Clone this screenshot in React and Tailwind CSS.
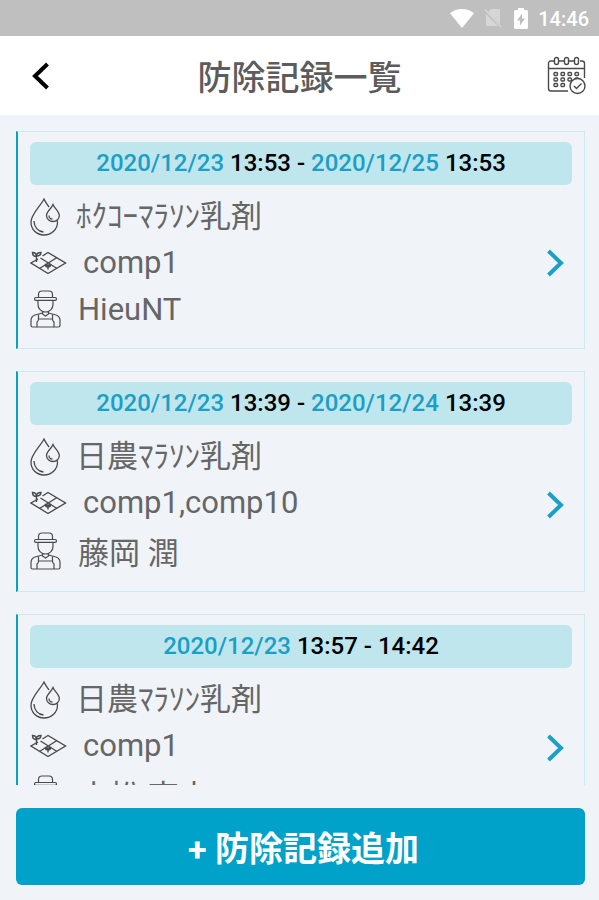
const records = [
  {
    id: 1,
    period: [
      { date: "2020/12/23", time: "13:53" },
      { date: "2020/12/25", time: "13:53" },
    ],
    pesticide: "ﾎｸｺｰﾏﾗｿﾝ乳剤",
    fields: "comp1",
    worker: "HieuNT",
  },
  {
    id: 2,
    period: [
      { date: "2020/12/23", time: "13:39" },
      { date: "2020/12/24", time: "13:39" },
    ],
    pesticide: "日農ﾏﾗｿﾝ乳剤",
    fields: "comp1,comp10",
    worker: "藤岡 潤",
  },
  {
    id: 3,
    period: [{ date: "2020/12/23", time: "13:57" }, { time: "14:42" }],
    pesticide: "日農ﾏﾗｿﾝ乳剤",
    fields: "comp1",
    worker: "小松 亮太",
  },
]

function WifiIcon() {
  return (
    <svg viewBox="0 0 24 19" className="h-[19px] w-6" fill="#fff" aria-hidden="true">
      <path d="M12 19 0 4.2C3.3 1.5 7.400 0 12 0s8.700 1.500 12 4.200z" />
    </svg>
  )
}

function NoSimIcon() {
  return (
    <svg viewBox="0 0 18 20" className="h-5 w-[18px]" fill="none" aria-hidden="true">
      <path d="M4 4 7 1h9v15zM2 6v12h12z" fill="#d6d6d6" />
      <path d="M1 1.500 17 19" stroke="#d6d6d6" strokeWidth="1.500" />
    </svg>
  )
}

function BatteryIcon() {
  return (
    <svg viewBox="0 0 14 21" className="h-[21px] w-3.5" aria-hidden="true">
      <path
        fill="#fff"
        fillRule="evenodd"
        d="M4 0h6v2h2.500Q14 2 14 3.500v16q0 1.500-1.500 1.500h-11Q0 21 0 19.500v-16Q0 2 1.500 2H4zM8 5.500 3 12.500h3v5l5-7H8z"
      />
    </svg>
  )
}

function CalendarIcon() {
  return (
    <svg viewBox="0 0 40 40" className="size-10" fill="none" stroke="#4a4a4a" strokeWidth="1.400" aria-hidden="true">
      <path d="M7 5H4Q1.500 5 1.500 7.500v25Q1.500 35 4 35h17M37.500 22V7.500Q37.500 5 35 5h-2M12 5h5M22 5h5M1.500 12.500h36" />
      <rect x="7.500" y="1.500" width="4" height="7" rx="2" />
      <rect x="17.500" y="1.500" width="4" height="7" rx="2" />
      <rect x="27.500" y="1.500" width="4" height="7" rx="2" />
      {[7, 14, 21, 28].map((x) => (
        <rect key={x} x={x} y="16.500" width="3.500" height="3" rx="1" />
      ))}
      {[7, 14, 21, 28].map((x) => (
        <rect key={x} x={x} y="22" width="3.500" height="3" rx="1" />
      ))}
      {[7, 14].map((x) => (
        <rect key={x} x={x} y="27.500" width="3.500" height="3" rx="1" />
      ))}
      <circle cx="30.500" cy="30" r="7.500" fill="#fff" />
      <path d="m27 30 2.500 2.500 5-5" />
    </svg>
  )
}

function DropIcon() {
  return (
    <svg viewBox="0 0 30 38" className="h-[38px] w-[30px]" fill="none" stroke="#4a4a4a" strokeWidth="1.300" aria-hidden="true">
      <path d="M19 9C16.500 5.500 14.800 3 14 1 10.500 8 1 16.500 1 24c0 7.500 5.500 13 13 13s13.500-5.500 13.500-13l-.5-2" />
      <path d="M23 6.500c-1.500 4-6.500 7-6.500 11 0 3.500 3 6 6.500 6s6.300-2.500 6.300-6c0-4-4.800-7-6.300-11z" />
      <path d="M4 23c0 6 4 10.500 9.500 11M19 17.500c0 2 1.500 3.500 3.500 3.500" />
    </svg>
  )
}

function FieldIcon() {
  return (
    <svg viewBox="0 0 37 24" className="h-6 w-[37px]" fill="none" stroke="#4a4a4a" strokeWidth="1.400" aria-hidden="true">
      <path d="M8 8 1 12l17 10.500L35.500 12 18 1.500 12.500 5" />
      <path d="M9.500 17.500 27 6.500M27 17.500 10.500 7" />
      <path d="M6.500 11V4.500M6.500 5.500C4 5.500 2.500 4 2.500 1.500c2.500 0 4 1.500 4 4zM6.500 5c0-2 1.500-3.500 4.500-3.500C11 4 9.500 5 6.500 5z" />
      <path d="M18 18.500V14M18 16c-1.500 0-2.500-1-2.500-2.500 1.500 0 2.500 1 2.500 2.500zM18 16c0-1.500 1-2.500 2.500-2.500 0 1.500-1 2.500-2.500 2.500z" />
    </svg>
  )
}

function FarmerIcon() {
  return (
    <svg viewBox="0 0 32 38" className="h-[38px] w-8" fill="none" stroke="#4a4a4a" strokeWidth="1.200" aria-hidden="true">
      <path d="M8.500 8V4.500q0-3.500 3.500-3.500h7q3.500 0 3.500 3.500V8" />
      <rect x="4.500" y="7.500" width="22" height="2.800" rx="1.400" />
      <path d="M8 10.500v4c0 4.500 3.500 7.500 7.500 7.500s7.500-3 7.500-7.500v-4M12.500 21.500V24l3 2 3-2v-2.500" />
      <path d="M12.500 23 5 25q-4 1.500-4 5.500v5Q1 37 2.500 37h26q1.500 0 1.500-1.500v-5q0-4-4-5.500l-7.500-2" />
      <path d="M8.500 24.500V29h14v-4.500M8.500 29q0 2-1.500 3v5M22.500 29q0 2 1.500 3v5" />
    </svg>
  )
}

function Chevron({ left = false, className }) {
  return (
    <svg viewBox="0 0 17 28" className={className} fill="none" stroke="currentColor" strokeWidth="4" aria-hidden="true">
      <path d={left ? "M15.500 2 3 14l12.500 12" : "M1.500 2 14 14 1.500 26"} />
    </svg>
  )
}

function StatusBar() {
  return (
    <div className="flex h-9 shrink-0 items-center justify-end bg-[#bfbfbf] pr-2.5 text-white">
      <WifiIcon />
      <span className="ml-2.5">
        <NoSimIcon />
      </span>
      <span className="ml-3">
        <BatteryIcon />
      </span>
      <time className="ml-2.5 pt-0.5 text-xl font-medium">14:46</time>
    </div>
  )
}

function Period({ period }) {
  return (
    <h2 className="rounded-md bg-[#c0e6ed] text-center text-2xl leading-[43px] font-medium text-black">
      {period.map((point, idx) => (
        <span key={idx}>
          {idx > 0 && " - "}
          {point.date && <span className="text-[#1a9fc6]">{point.date} </span>}
          {point.time}
        </span>
      ))}
    </h2>
  )
}

function RecordCard({ record }) {
  return (
    <li className="border border-l-2 border-[#cfeaec] border-l-[#0a9fc4] pt-2.5 pr-3 pb-[15px] pl-3">
      <Period period={record.period} />
      <a href={`#record-${record.id}`} className="flex items-center justify-between pt-2">
        <div className="text-[31px] text-[#666]">
          <div className="flex h-12 items-center gap-4 leading-[48px]">
            <DropIcon />
            <span>{record.pesticide}</span>
          </div>
          <div className="flex h-11 items-center gap-4 leading-[48px]">
            <FieldIcon />
            <span>{record.fields}</span>
          </div>
          <div className="flex min-h-12 items-center gap-4 py-[3px] leading-normal">
            <FarmerIcon />
            <span className="leading-[normal]">{record.worker}</span>
          </div>
        </div>
        <Chevron className="mr-2 h-7 w-[17px] text-[#1a9fc6]" />
      </a>
    </li>
  )
}

export default function App() {
  return (
    <div className="flex h-screen flex-col bg-[#f0f4f9] font-[Roboto,'Noto_Sans_CJK_JP',sans-serif]">
      <StatusBar />
      <header className="grid h-[79px] shrink-0 grid-cols-[1fr_auto_1fr] items-center bg-white px-3">
        <button type="button" aria-label="戻る" className="justify-self-start pl-5 text-black">
          <Chevron left className="h-7 w-[17px]" />
        </button>
        <h1 className="pt-1.5 text-[34px] font-medium text-[#5c5c5c]">防除記録一覧</h1>
        <button type="button" aria-label="カレンダー" className="justify-self-end">
          <CalendarIcon />
        </button>
      </header>
      <main className="min-h-0 flex-1 overflow-y-auto pt-4 pr-3.5 pl-4 [scrollbar-width:none]">
        <ul className="space-y-[22px]">
          {records.map((record) => (
            <RecordCard key={record.id} record={record} />
          ))}
        </ul>
      </main>
      <footer className="shrink-0 pt-[23px] pr-3.5 pb-[15px] pl-4">
        <button type="button" className="h-[77px] w-full rounded-md bg-[#00a2c9] pt-1.5 pl-1.5 text-[34px] font-bold text-white">
          + 防除記録追加
        </button>
      </footer>
    </div>
  )
}
